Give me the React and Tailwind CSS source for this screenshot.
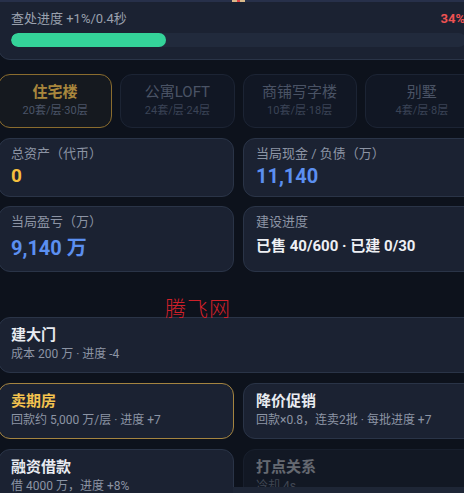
import React from "react";

const tabs = [
  { name: "住宅楼", sub: "20套/层·30层", active: true },
  { name: "公寓LOFT", sub: "24套/层·24层" },
  { name: "商铺写字楼", sub: "10套/层·18层" },
  { name: "别墅", sub: "4套/层·8层" },
];

function ActionCard({ title, sub, gold, dim, children }) {
  return (
    <div
      className={`relative rounded-xl border pt-[7px] pb-[9px] px-3 overflow-hidden ${
        gold ? "border-[#a48440] bg-[#1b2232]" : "border-[#2a3447] bg-[#1b2232]"
      } ${dim ? "opacity-40" : ""}`}
    >
      <div className={`text-[15px] leading-[20px] font-bold ${gold ? "text-[#f3c24f]" : "text-[#e8ebf0]"}`}>{title}</div>
      <div className="text-[12px] leading-[18px] text-[#8c94a4]">{sub}</div>
      {children}
    </div>
  );
}

export default function App() {
  return (
    <div
      className="relative w-[464px] h-[493px] overflow-hidden bg-[#0d121c]"
      style={{ fontFamily: "Roboto, 'Noto Sans CJK SC', sans-serif" }}
    >
      <div className="ml-[-2px] w-[481px] -mt-[12px] flex flex-col">
        {/* progress */}
        <div className="rounded-xl border border-[#2a3447] bg-[#1b2232] pt-[21px] pb-[12px] px-3">
          <div className="flex justify-between text-[13px] leading-[18px]">
            <span className="text-[#9aa1ae]">查处进度 +1%/0.4秒</span>
            <span className="text-[#f05252] font-bold pr-[1px]">34%</span>
          </div>
          <div className="mt-[5px] h-[14px] rounded-full bg-[#212a3c] overflow-hidden">
            <div className="h-full rounded-full bg-[#34d399]" style={{ width: "34%" }} />
          </div>
        </div>

        {/* tabs */}
        <div className="mt-[14px] grid grid-cols-4 gap-2">
          {tabs.map((t) => (
            <div
              key={t.name}
              className={`rounded-xl border text-center pt-[7px] pb-[7px] ${
                t.active ? "border-[#8a6c2e] bg-[#15191f]" : "border-[#1c2434] bg-[#111724]"
              }`}
            >
              <div className={`text-[15px] leading-[20px] ${t.active ? "font-bold text-[#a8873d]" : "text-[#4a5365]"}`}>{t.name}</div>
              <div className={`text-[11px] leading-[18px] ${t.active ? "text-[#4a5467]" : "text-[#3a4356]"}`}>{t.sub}</div>
            </div>
          ))}
        </div>

        {/* stats */}
        <div className="mt-[10px] grid grid-cols-2 gap-x-[9px] gap-y-[9px]">
          <div className="rounded-xl border border-[#2a3447] bg-[#1b2232] px-3 pt-[6px] pb-[7px]">
            <div className="text-[13px] leading-[18px] text-[#8c94a4]">总资产（代币）</div>
            <div className="text-[19px] leading-[26px] font-bold text-[#f5bf3e]">0</div>
          </div>
          <div className="rounded-xl border border-[#2a3447] bg-[#1b2232] px-3 pt-[6px] pb-[7px]">
            <div className="text-[13px] leading-[18px] text-[#8c94a4]">当局现金 / 负债（万）</div>
            <div className="text-[20px] leading-[26px] font-bold text-[#5b8ff0]">11,140</div>
          </div>
          <div className="rounded-xl border border-[#2a3447] bg-[#1b2232] px-3 pt-[6px] pb-[8px]">
            <div className="text-[13px] leading-[18px] text-[#8c94a4]">当局盈亏（万）</div>
            <div className="mt-[2px] text-[20px] leading-[30px] font-bold text-[#5b8ff0]">9,140 万</div>
          </div>
          <div className="rounded-xl border border-[#2a3447] bg-[#1b2232] px-3 pt-[6px] pb-[8px]">
            <div className="text-[13px] leading-[18px] text-[#8c94a4]">建设进度</div>
            <div className="mt-[2px] text-[15px] leading-[26px] font-bold text-[#eef0f4]">已售 40/600 · 已建 0/30</div>
          </div>
        </div>

        {/* actions */}
        <div className="mt-[45px] flex flex-col gap-[10px]">
          <ActionCard title="建大门" sub="成本 200 万 · 进度 -4" />
          <div className="grid grid-cols-2 gap-x-[9px] gap-y-[10px]">
            <ActionCard title="卖期房" sub="回款约 5,000 万/层 · 进度 +7" gold />
            <ActionCard title="降价促销" sub="回款×0.8，连卖2批 · 每批进度 +7" />
            <ActionCard title="融资借款" sub="借 4000 万，进度 +8%" />
            <ActionCard title="打点关系" sub="冷却 4s" dim />
          </div>
        </div>
      </div>

      {/* top edge strip */}
      <div className="absolute left-0 top-0 w-full h-[2px] bg-[#27304a]" />
      <div className="absolute left-[232px] top-0 w-[13px] h-[2px] bg-[#d9b98a]">
        <div className="mx-auto w-[3px] h-full bg-[#e04545]" />
      </div>

      {/* cooldown overlay */}
      <div className="absolute left-[233px] top-[487px] w-[231px] h-[6px] bg-[#1e2636]" />

      {/* watermark */}
      <div
        className="absolute left-[165px] top-[294px] text-[21px] leading-[26px] text-[#d0202a] font-light tracking-[1px]"
        style={{ fontFamily: "'Noto Sans CJK SC', sans-serif" }}
      >
        腾飞网
      </div>
    </div>
  );
}
